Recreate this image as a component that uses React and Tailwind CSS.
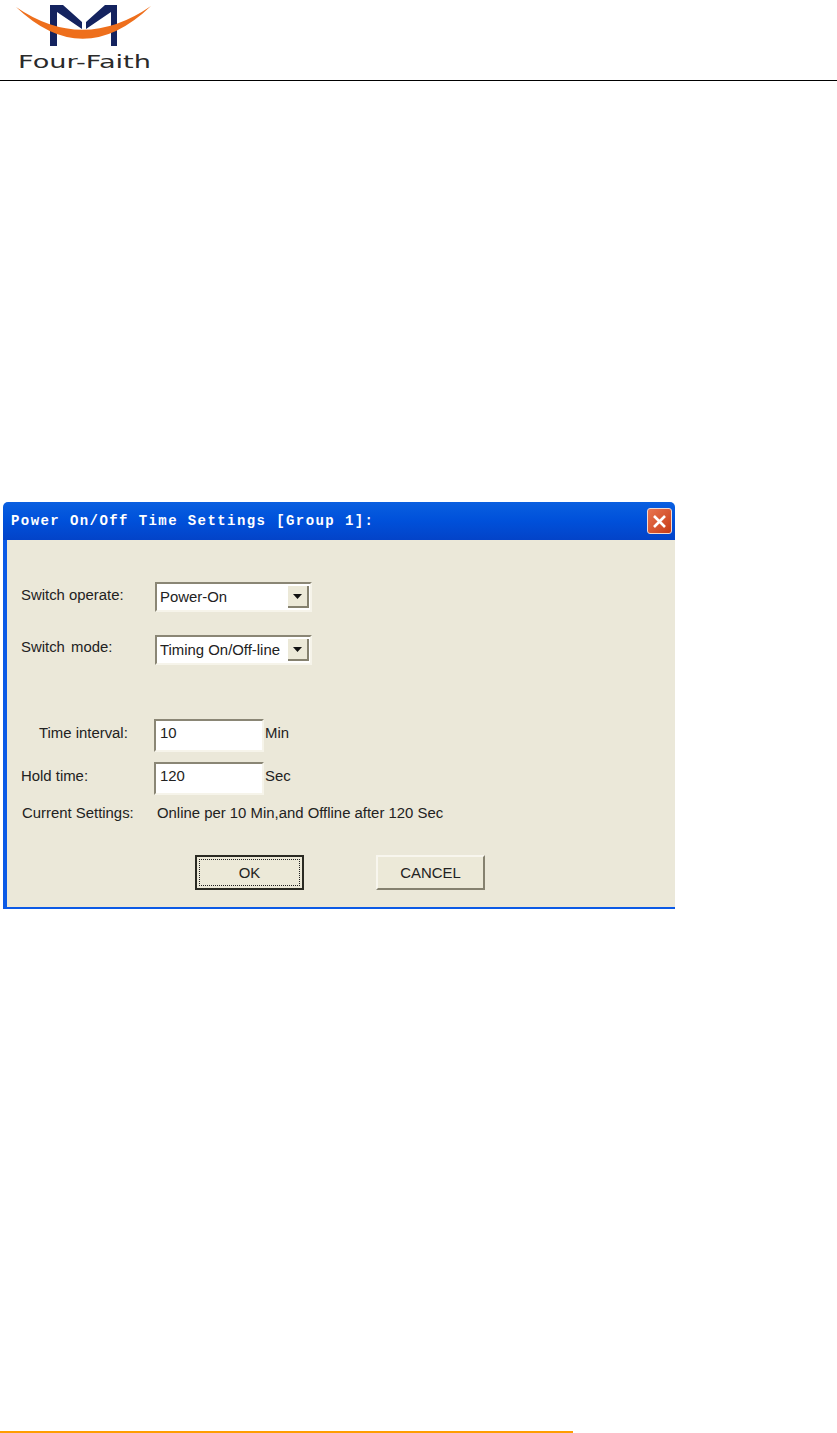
import React from "react";

function Logo() {
  return (
    <svg width="170" height="80" viewBox="0 0 170 80" className="block">
      <path d="M50 5 L63 5 L82 22 L82 29 L57 12 L57 46 L50 46 Z" fill="#14235f" />
      <path d="M117 5 L105 5 L86 22 L86 29 L111 12 L111 46 L117 46 Z" fill="#14235f" />
      <path d="M16 7 Q83 71 151 6 Q83 53 16 7 Z" fill="#ee6f1c" />
      <text
        x="18"
        y="68"
        textLength="133"
        lengthAdjust="spacingAndGlyphs"
        fontFamily="'DejaVu Sans', sans-serif"
        fontSize="18"
        fill="#2a2a2a"
      >
        Four-Faith
      </text>
    </svg>
  );
}

function Arrow() {
  return (
    <svg width="9" height="5" viewBox="0 0 9 5">
      <path d="M0 0H9L4.5 5Z" fill="#111" />
    </svg>
  );
}

function Select({ value }) {
  return (
    <div className="flex h-[30px] w-[157px] items-center justify-between border-2 border-t-[#8a8675] border-l-[#8a8675] border-r-[#f6f4ea] border-b-[#f6f4ea] bg-white pl-[3px] pr-[1px]">
      <span className="whitespace-nowrap">{value}</span>
      <span className="flex h-[22px] w-[21px] items-center justify-center border-r-2 border-b-2 border-r-[#85816f] border-b-[#85816f] bg-[#ece9d8]">
        <Arrow />
      </span>
    </div>
  );
}

function Field({ value }) {
  return (
    <div className="h-[33px] w-[110px] border-2 border-t-[#8a8675] border-l-[#8a8675] border-r-[#f6f4ea] border-b-[#f6f4ea] bg-white pl-[4px] pt-[1px] leading-[22px]">
      {value}
    </div>
  );
}

function Btn({ children, className }) {
  return (
    <div className={`flex h-[35px] w-[109px] items-center justify-center ${className}`}>
      {children}
    </div>
  );
}

export default function App() {
  return (
    <div className="flex h-[1433px] w-[837px] flex-col overflow-hidden bg-white font-['Liberation_Sans',Arial,sans-serif] text-[14.9px] text-[#222]">
      <header className="h-[81px] border-b border-black">
        <Logo />
      </header>

      <section className="ml-[3px] mt-[421px] flex h-[407px] w-[672px] flex-col">
        <div className="flex h-[38px] items-center justify-between rounded-t-[5px] bg-gradient-to-b from-[#0a5fe0] via-[#0050da] to-[#0343c8] pl-2 pr-[3px]">
          <span className="whitespace-nowrap font-['Liberation_Mono',monospace] text-[14px] font-bold tracking-[1.42px] text-white">
            Power On/Off Time Settings [Group 1]:
          </span>
          <span className="flex h-[26px] w-[25px] items-center justify-center rounded-[3px] border border-[#f3d9cf] bg-gradient-to-br from-[#e8744f] to-[#c73a12]">
            <svg width="15" height="15" viewBox="0 0 15 15">
              <path d="M2 2L13 13M13 2L2 13" stroke="#fff" strokeWidth="2.6" />
            </svg>
          </span>
        </div>

        <div className="flex flex-1 flex-col border-b-2 border-l-4 border-[#0b5ae6] bg-[#ebe8d9]">
          <div className="ml-[14px] mt-[42px] flex items-center">
            <span className="w-[134px] pb-[4px]">Switch operate:</span>
            <Select value="Power-On" />
          </div>
          <div className="ml-[14px] mt-[23px] flex items-center">
            <span className="w-[134px] pb-[6px] [word-spacing:2px]">Switch mode:</span>
            <Select value="Timing On/Off-line" />
          </div>

          <div className="ml-[14px] mt-[54px] flex items-center">
            <span className="w-[133px] pb-[4px] pl-[18px]">Time interval:</span>
            <Field value="10" />
            <span className="ml-[1px] pb-[4px]">Min</span>
          </div>
          <div className="ml-[14px] mt-[10px] flex items-center">
            <span className="w-[133px] pb-[4px]">Hold time:</span>
            <Field value="120" />
            <span className="ml-[1px] pb-[4px]">Sec</span>
          </div>
          <div className="ml-[15px] mt-[7px] flex items-center">
            <span className="w-[135px]">Current Settings:</span>
            <span className="whitespace-nowrap">Online per 10 Min,and Offline after 120 Sec</span>
          </div>

          <div className="ml-[188px] mt-[31px] flex gap-[72px]">
            <Btn className="border-2 border-[#2a2a22] bg-[#ece9d8] p-[2px]">
              <span className="flex h-full w-full items-center justify-center border border-dotted border-[#222]">
                OK
              </span>
            </Btn>
            <Btn className="border-2 border-t-[#f8f6ee] border-l-[#f8f6ee] border-r-[#85816f] border-b-[#85816f] bg-[#ece9d8]">
              CANCEL
            </Btn>
          </div>
        </div>
      </section>

      <div className="mt-auto h-[2px] w-[573px] bg-[#ff9d00]" />
    </div>
  );
}
